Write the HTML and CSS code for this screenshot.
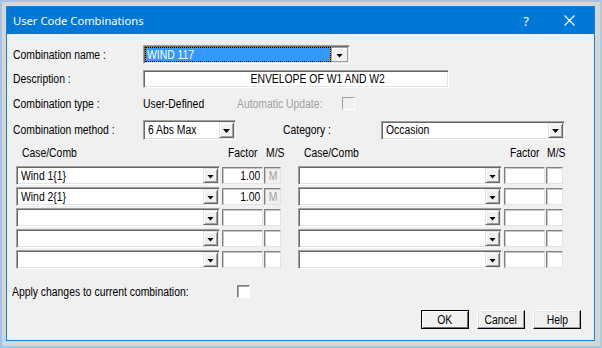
FILE: index.html
```html
<!DOCTYPE html>
<html>
<head>
<meta charset="utf-8">
<link rel="stylesheet" href="styles.css">
</head>
<body>
<div class="screen">
  <div class="window">
    <div class="titlebar">
      <span class="title">User Code Combinations</span>
      <span class="tb-help">?</span>
      <span class="tb-close"><svg width="11" height="11" viewBox="0 0 11 11"><path d="M0.5 0.5 L10.5 10.5 M10.5 0.5 L0.5 10.5" stroke="#fff" stroke-width="1.1" fill="none"/></svg></span>
    </div>
    <div class="content">
      <div class="row r-name">
        <span class="lbl"><span class="t">Combination name :</span></span>
        <div class="combo name-combo">
          <div class="focus-wrap"><div class="focus"><span class="t">WIND 117</span></div></div>
          <span class="ddbtn big"><i class="arrow"></i></span>
        </div>
      </div>
      <div class="row r-desc">
        <span class="lbl"><span class="t">Description :</span></span>
        <div class="textbox desc"><span class="t tc">ENVELOPE OF W1 AND W2</span></div>
      </div>
      <div class="row r-type">
        <span class="lbl"><span class="t">Combination type :</span></span>
        <span class="val-type"><span class="t">User-Defined</span></span>
        <span class="disabled auto-lbl"><span class="t">Automatic Update:</span></span>
        <span class="check dis"></span>
      </div>
      <div class="row r-method">
        <span class="lbl"><span class="t">Combination method :</span></span>
        <div class="combo method-combo"><span class="ctext"><span class="t">6 Abs Max</span></span><span class="ddbtn"><i class="arrow"></i></span></div>
        <span class="cat-lbl"><span class="t">Category :</span></span>
        <div class="combo cat-combo"><span class="ctext"><span class="t">Occasion</span></span><span class="ddbtn"><i class="arrow"></i></span></div>
      </div>
      <div class="table">
        <div class="group">
          <span class="hd hd-case"><span class="t">Case/Comb</span></span><span class="hd hd-factor"><span class="t">Factor</span></span><span class="hd hd-ms"><span class="t">M/S</span></span>
          <div class="combo tcombo"><span class="ctext"><span class="t">Wind 1{1}</span></span><span class="ddbtn"><i class="arrow"></i></span></div><div class="fbox"><span class="t tr">1.00</span></div><div class="msbox dis"><span class="t tc">M</span></div>
          <div class="combo tcombo"><span class="ctext"><span class="t">Wind 2{1}</span></span><span class="ddbtn"><i class="arrow"></i></span></div><div class="fbox"><span class="t tr">1.00</span></div><div class="msbox dis"><span class="t tc">M</span></div>
          <div class="combo tcombo"><span class="ctext"></span><span class="ddbtn"><i class="arrow"></i></span></div><div class="fbox"></div><div class="msbox"></div>
          <div class="combo tcombo"><span class="ctext"></span><span class="ddbtn"><i class="arrow"></i></span></div><div class="fbox"></div><div class="msbox"></div>
          <div class="combo tcombo"><span class="ctext"></span><span class="ddbtn"><i class="arrow"></i></span></div><div class="fbox"></div><div class="msbox"></div>
        </div>
        <div class="group">
          <span class="hd hd-case"><span class="t">Case/Comb</span></span><span class="hd hd-factor"><span class="t">Factor</span></span><span class="hd hd-ms2"><span class="t">M/S</span></span>
          <div class="combo tcombo"><span class="ctext"></span><span class="ddbtn"><i class="arrow"></i></span></div><div class="fbox"></div><div class="msbox"></div>
          <div class="combo tcombo"><span class="ctext"></span><span class="ddbtn"><i class="arrow"></i></span></div><div class="fbox"></div><div class="msbox"></div>
          <div class="combo tcombo"><span class="ctext"></span><span class="ddbtn"><i class="arrow"></i></span></div><div class="fbox"></div><div class="msbox"></div>
          <div class="combo tcombo"><span class="ctext"></span><span class="ddbtn"><i class="arrow"></i></span></div><div class="fbox"></div><div class="msbox"></div>
          <div class="combo tcombo"><span class="ctext"></span><span class="ddbtn"><i class="arrow"></i></span></div><div class="fbox"></div><div class="msbox"></div>
        </div>
      </div>
      <div class="row r-apply">
        <span class="apply-lbl"><span class="t">Apply changes to current combination:</span></span>
        <span class="check"></span>
      </div>
      <div class="row r-buttons">
        <button class="btn default"><span class="t tc">OK</span></button>
        <button class="btn"><span class="t tc">Cancel</span></button>
        <button class="btn"><span class="t tc">Help</span></button>
      </div>
    </div>
  </div>
</div>
</body>
</html>
```
FILE: styles.css
```css
* { box-sizing: border-box; margin: 0; padding: 0; }
html, body { margin: 0; width: 602px; height: 348px; overflow: hidden; }
body {
  font-family: "Liberation Sans", Arial, sans-serif;
  font-size: 12px;
  color: #000;
  background: #d6d6d6;
}
/* dialog font is a width-condensed Arial */
.t { display: inline-block; white-space: nowrap; transform: scaleX(0.865); transform-origin: left center; }
.t.tc { transform-origin: center center; }
.t.tr { transform-origin: right center; }

.screen {
  width: 602px; height: 348px;
  border: 2px solid #a6c3e6;
  border-right-color: #a3d0e4;
  border-bottom-color: #93cfe0;
  background: #d6d6d6;
  padding: 4px 5px 5px 4px;
}
.window {
  height: 100%;
  border: 1px solid #1c80d6;
  display: flex; flex-direction: column;
  background: #f0f0f0;
}
.titlebar {
  flex: none; height: 27px;
  background: #0078d7; color: #fff;
  display: flex; align-items: center;
  font-family: "Noto Sans", "Open Sans", sans-serif; font-size: 11.2px;
  padding-left: 6px;
}
.title { flex: 1; }
.tb-help { font-size: 13px; margin-right: 35px; }
.tb-close { display: flex; margin-right: 19px; }
.content {
  flex: 1;
  display: flex; flex-direction: column;
  padding: 0 13px 0 6px;
}
.row { display: flex; align-items: center; flex: none; }
.lbl { width: 130px; flex: none; }
.r-name { margin-top: 11px; height: 19px; }
.r-desc { margin-top: 6px; height: 18px; }
.r-type { margin-top: 9px; height: 13px; }
.r-method { margin-top: 10px; height: 20px; }

/* sunken field */
.combo, .textbox {
  display: flex; align-items: stretch;
  background: #fff;
  border: 1px solid;
  border-color: #a0a0a0 #fff #fff #a0a0a0;
  box-shadow: inset 1px 1px 0 #696969, inset -1px -1px 0 #e3e3e3;
  padding: 1px;
}
.ctext { flex: 1; padding-left: 3px; display: flex; align-items: center; overflow: hidden; }
.name-combo { width: 207px; height: 19px; }
.focus-wrap { flex: 1; background: #d4720a; display: flex; }
.focus {
  flex: 1; border: 1px dotted #000; background: #3399ff; background-clip: padding-box;
  color: #fff; padding-left: 1px; display: flex; align-items: center;
}
.ddbtn {
  flex: none; width: 15px;
  background: #f0f0f0;
  border: 1px solid; border-color: #e3e3e3 #696969 #696969 #e3e3e3;
  box-shadow: inset 1px 1px 0 #fff, inset -1px -1px 0 #a0a0a0;
  display: flex; align-items: center; justify-content: center;
  padding-top: 2px;
}
.ddbtn.big { width: 17px; border-color: #a0a0a0; box-shadow: inset 1px 1px 0 #fff; }
.arrow { display: block; width: 7px; height: 4px; background: #000; clip-path: polygon(0 0, 100% 0, 50% 100%); }
.desc { width: 306px; height: 18px; justify-content: center; align-items: center; padding-left: 44px; }
.val-type { width: 94px; }
.disabled { color: #a0a0a0; }
.auto-lbl { width: 105px; }
.check {
  width: 13px; height: 13px; flex: none;
  background: #fff;
  border: 1px solid; border-color: #808080 #fff #fff #808080;
  box-shadow: inset 1px 1px 0 #a0a0a0;
}
.check.dis { background: #f0f0f0; border-color: #a0a0a0 #fff #fff #a0a0a0; box-shadow: none; }
.method-combo { width: 93px; height: 20px; }
.cat-lbl { margin-left: 47px; width: 98px; }
.cat-combo { width: 184px; height: 19px; }

.table { display: flex; gap: 17px; margin-left: 3px; margin-top: 7px; flex: none; }
.group {
  display: grid;
  grid-template-columns: 206px 42px 17px;
  grid-template-rows: 17px repeat(5, 19px);
  row-gap: 2px;
}
.hd { line-height: 13px; align-self: start; white-space: nowrap; }
.hd-case { padding-left: 6px; }
.hd-factor { padding-left: 6px; }
.hd-ms { padding-left: 2px; }
.hd-ms2 { padding-left: 1px; }
.tcombo { width: 204px; height: 19px; }
.fbox, .msbox {
  height: 17px; margin-top: 1px;
  background: #fff;
  border: 1px solid; border-color: #808080 #e3e3e3 #e3e3e3 #808080;
  box-shadow: inset 1px 1px 0 #c8c8c8;
  display: flex; align-items: center;
}
.fbox { width: 41px; justify-content: flex-end; padding-right: 2px; }
.msbox { width: 17px; justify-content: center; }
.msbox.dis { background: #f0f0f0; color: #a0a0a0; }

.r-apply { margin-top: 16px; height: 13px; margin-left: -1px; }
.apply-lbl { width: 225px; }
.r-buttons { margin-top: 12px; justify-content: flex-end; gap: 8px; }
.btn {
  width: 48px; height: 19px;
  font: inherit; color: #000;
  background: #f0f0f0;
  border: 1px solid; border-color: #fff #000 #000 #fff;
  box-shadow: inset -1px -1px 0 #a0a0a0, inset 1px 1px 0 #e3e3e3;
  display: flex; align-items: center; justify-content: center;
}
.btn.default { border-color: #000; box-shadow: inset 1px 1px 0 #fff, inset -1px -1px 0 #696969; }
```
